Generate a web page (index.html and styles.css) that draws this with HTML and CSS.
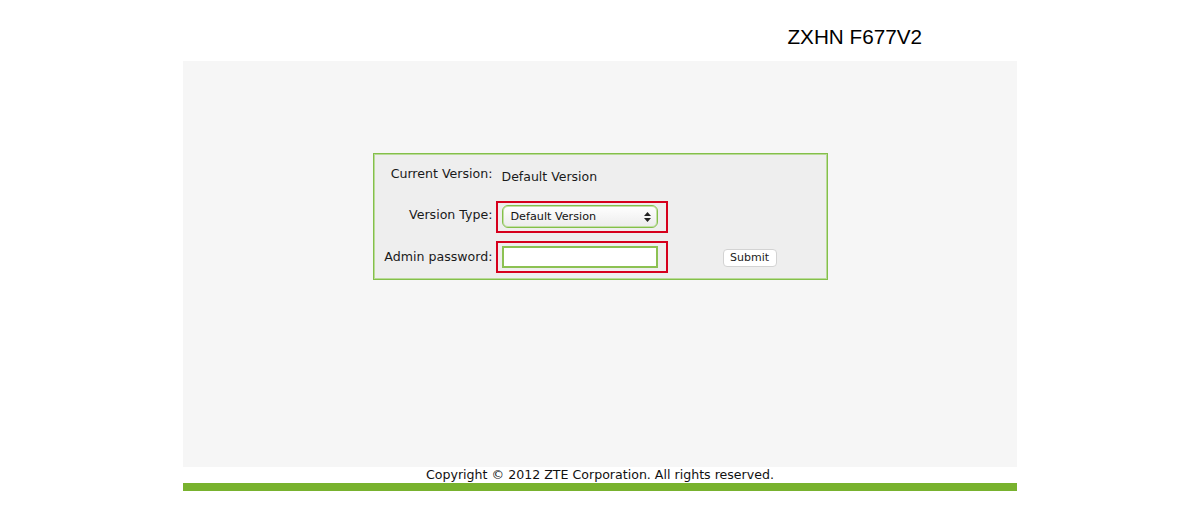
FILE: index.html
```html
<!DOCTYPE html>
<html>
<head>
<meta charset="utf-8">
<title>ZXHN F677V2</title>
<link rel="stylesheet" href="styles.css">
</head>
<body>
<div class="page">
  <header class="header">
    <h1 class="model">ZXHN F677V2</h1>
  </header>
  <main class="panel">
    <form class="login-box">
      <div class="row row-current">
        <span class="label">Current Version:</span>
        <span class="value">Default Version</span>
      </div>
      <div class="row row-type">
        <span class="label">Version Type:</span>
        <div class="highlight">
          <div class="select">
            <span class="select-text">Default Version</span>
            <svg class="select-arrows" width="7" height="10" viewBox="0 0 7 10">
              <path d="M3.5 0 L7 4 L0 4 Z M3.5 10 L7 6 L0 6 Z" fill="#222"/>
            </svg>
          </div>
        </div>
      </div>
      <div class="row row-pass">
        <span class="label">Admin password:</span>
        <div class="highlight">
          <input class="password" type="password">
        </div>
        <button class="submit" type="button">Submit</button>
      </div>
    </form>
  </main>
  <footer class="footer">
    <p class="copyright">Copyright © 2012 ZTE Corporation. All rights reserved.</p>
    <div class="green-bar"></div>
  </footer>
</div>
</body>
</html>
```
FILE: styles.css
```css
html, body {
  margin: 0;
  padding: 0;
  background: #ffffff;
}
body {
  font-family: "DejaVu Sans", Verdana, sans-serif;
  color: #1a1a1a;
}
.page {
  width: 834px;
  margin: 0 auto;
}
.header {
  height: 61px;
  display: flex;
  justify-content: flex-end;
  align-items: flex-start;
  padding-right: 95px;
  box-sizing: border-box;
}
.model {
  margin: 25px 0 0 0;
  font-family: "Liberation Sans", Arial, sans-serif;
  font-weight: normal;
  font-size: 20.7px;
  line-height: 24px;
  color: #000;
}
.panel {
  height: 406px;
  background: #f6f6f6;
  padding-top: 92px;
  box-sizing: border-box;
  display: flex;
  justify-content: center;
  align-items: flex-start;
}
.login-box {
  width: 455px;
  height: 127px;
  box-sizing: border-box;
  border: 1px solid #84bf4a;
  box-shadow: inset 0 0 0 1px #b9db98;
  background: #eeeeee;
  display: flex;
  flex-direction: column;
  margin: 0;
}
.row {
  display: flex;
  align-items: center;
}
.label {
  width: 119px;
  text-align: right;
  font-size: 12.6px;
  line-height: 16px;
  color: #1a1a1a;
  box-sizing: border-box;
}
.row-current {
  margin-top: 11px;
  height: 18px;
}
.row-current .value {
  margin-left: 9px;
  font-size: 12.5px;
  line-height: 16px;
  padding-top: 5px;
}
.row-type {
  margin-top: 18px;
}
.row-pass {
  margin-top: 8px;
}
.row-type .label {
  padding-bottom: 4px;
}
.row-pass .label {
  padding-bottom: 1px;
}
.highlight {
  margin-left: 3px;
  width: 172px;
  height: 32px;
  box-sizing: border-box;
  border: 2px solid #d6001c;
  display: flex;
  align-items: flex-start;
}
.row-type .highlight {
  padding: 2px 0 0 4px;
}
.row-pass .highlight {
  padding: 3px 0 0 4px;
}
.select {
  width: 156px;
  height: 23px;
  box-sizing: border-box;
  border: 1px solid #84bf4a;
  box-shadow: inset 0 0 0 1px #c3e0a6;
  border-radius: 6px;
  background: linear-gradient(#ffffff, #ececec);
  display: flex;
  align-items: center;
  justify-content: space-between;
  padding: 0 6px 0 8px;
}
.select-text {
  font-size: 11.2px;
  line-height: 14px;
  color: #111;
}
.select-arrows {
  display: block;
}
.password {
  width: 156px;
  height: 22px;
  box-sizing: border-box;
  border: 2px solid #8cc152;
  background: #ffffff;
  margin: 0;
  padding: 0;
  outline: none;
}
.submit {
  margin-left: 55px;
  width: 54px;
  height: 18px;
  box-sizing: border-box;
  border: 1px solid #d3d3d3;
  border-radius: 4px;
  background: #ffffff;
  font-family: "DejaVu Sans", Verdana, sans-serif;
  font-size: 11px;
  line-height: 14px;
  color: #222;
  padding: 0;
  margin-top: 2px;
}
.footer {
  display: flex;
  flex-direction: column;
}
.copyright {
  margin: 0;
  height: 16px;
  text-align: center;
  font-size: 12.6px;
  line-height: 16px;
  color: #111;
}
.green-bar {
  height: 8px;
  background: #78b22e;
}
```
